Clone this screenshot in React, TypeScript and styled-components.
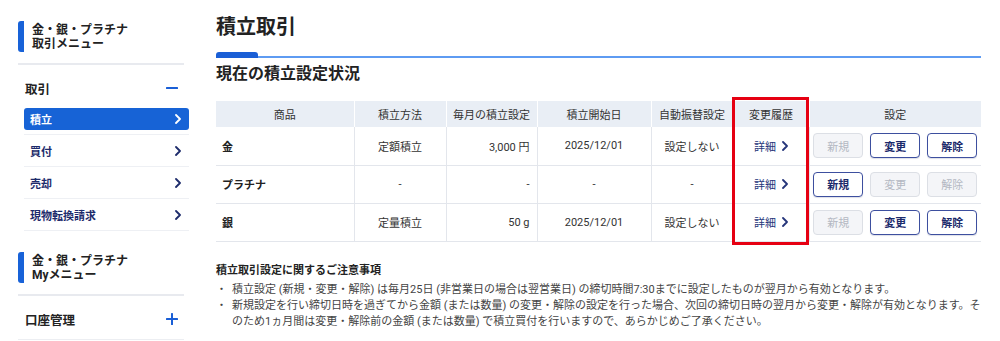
import React from "react";
import styled, { createGlobalStyle } from "styled-components";

const GlobalStyle = createGlobalStyle`
  html, body { margin: 0; padding: 0; background: #fff; }
  body { font-family: Roboto, "Noto Sans CJK JP", sans-serif; color: #333; }
  * { box-sizing: border-box; }
`;

const Page = styled.div`
  display: flex;
  width: 1000px;
  height: 341px;
  overflow: hidden;
  background: #fff;
`;

/* ---------- Sidebar ---------- */
const Sidebar = styled.aside`
  width: 189px;
  flex: none;
  padding: 21px 0 0 18px;
  display: flex;
  flex-direction: column;
`;

const SectionTitle = styled.div<{ $gap?: number }>`
  display: flex;
  align-items: stretch;
  gap: 8px;
  height: 31px;
  margin-top: ${(p) => p.$gap ?? 0}px;
`;

const TitleBar = styled.span`
  width: 6px;
  border-radius: 3px 0 0 3px;
  background: #1862d8;
`;

const TitleText = styled.div`
  display: flex;
  flex-direction: column;
  justify-content: center;
  font-size: 12px;
  font-weight: 700;
  line-height: 14px;
  color: #222;
`;

const Divider = styled.div`
  height: 2px;
  background: #e8eaef;
  margin: 11px 5px 0 0;
`;

const CategoryHeader = styled.div`
  display: flex;
  align-items: center;
  justify-content: space-between;
  height: 22px;
  margin: 12px 0 4px;
  padding: 0 11px 0 7px;
  font-size: 12.5px;
  font-weight: 700;
  color: #222;
`;

const Separator = styled.div`
  height: 1px;
  background: #eceef2;
  margin: 5px 5px 0 0;
`;

const NavList = styled.nav`
  display: flex;
  flex-direction: column;
  margin-left: 6px;
`;

const NavItem = styled.div`
  display: flex;
  align-items: center;
  height: 32px;
  border-bottom: 1px solid #eef0f4;
`;

const NavLabel = styled.div<{ $active?: boolean }>`
  flex: 1;
  height: 22px;
  display: flex;
  align-items: center;
  justify-content: space-between;
  padding: 0 8px 0 6px;
  border-radius: 3px;
  font-size: 11px;
  font-weight: 700;
  background: ${(p) => (p.$active ? "#1763d6" : "transparent")};
  color: ${(p) => (p.$active ? "#fff" : "#1d2b6b")};
`;

const Chevron = ({ color = "currentColor", w = 6, h = 10, sw = 1.8 }: { color?: string; w?: number; h?: number; sw?: number }) => (
  <svg width={w} height={h} viewBox="0 0 6 10" fill="none">
    <polyline points="1,1 5,5 1,9" stroke={color} strokeWidth={sw} strokeLinecap="round" strokeLinejoin="round" />
  </svg>
);

const MinusIcon = () => (
  <svg width="12" height="12" viewBox="0 0 12 12">
    <rect x="0" y="5" width="12" height="2" rx="0.5" fill="#1a5fd6" />
  </svg>
);

const PlusIcon = () => (
  <svg width="12" height="12" viewBox="0 0 12 12">
    <rect x="0" y="5" width="12" height="2" rx="0.5" fill="#1a5fd6" />
    <rect x="5" y="0" width="2" height="12" rx="0.5" fill="#1a5fd6" />
  </svg>
);

/* ---------- Main ---------- */
const Main = styled.main`
  flex: 1;
  padding: 13px 19px 0 27px;
  display: flex;
  flex-direction: column;
  min-width: 0;
`;

const PageTitle = styled.h1`
  margin: 0;
  font-size: 20px;
  line-height: 28px;
  font-weight: 700;
  color: #222;
`;

const TitleRule = styled.div`
  display: flex;
  align-items: flex-end;
  height: 6px;
  margin-top: 11px;
`;

const RuleAccent = styled.span`
  width: 42px;
  height: 6px;
  border-radius: 3px 3px 0 0;
  background: #1a5fd6;
`;

const RuleLine = styled.span`
  flex: 1;
  height: 2px;
  background: #5e9bf2;
`;

const SubTitle = styled.h2`
  margin: 6px 0 0;
  font-size: 16px;
  line-height: 20px;
  font-weight: 700;
  color: #222;
`;

const TableWrap = styled.div`
  position: relative;
  margin-top: 17px;
`;

const Table = styled.table`
  width: 100%;
  border-collapse: collapse;
  table-layout: fixed;
`;

const Th = styled.th`
  height: 26px;
  padding: 0;
  background: #e9eef5;
  font-size: 11px;
  font-weight: 400;
  color: #333;
  text-align: center;
  border-left: 1px solid #fff;
  &:first-child { border-left: none; }
`;

const Td = styled.td<{ $align?: "left" | "center" | "right"; $bold?: boolean }>`
  height: 38px;
  padding: ${(p) => (p.$align === "left" ? "0 0 0 6px" : p.$align === "right" ? "0 7px 0 0" : "0")};
  font-size: 11px;
  font-weight: ${(p) => (p.$bold ? 700 : 400)};
  color: ${(p) => (p.$bold ? "#222" : "#333")};
  text-align: ${(p) => p.$align ?? "center"};
  border-bottom: 1px solid #e3e6ec;
  border-left: 1px solid #e3e6ec;
  &:first-child { border-left: none; }
`;

const DetailLink = styled.span`
  display: inline-flex;
  align-items: center;
  gap: 6px;
  color: #25357a;
  font-size: 11px;
`;

const ButtonGroup = styled.div`
  display: flex;
  justify-content: center;
  gap: 7px;
`;

const ActionButton = styled.button`
  width: 50px;
  height: 25px;
  padding: 0;
  border-radius: 4px;
  font-family: inherit;
  font-size: 11px;
  font-weight: 700;
  background: #fff;
  color: #1b2a6b;
  border: 1.5px solid #3d4f9f;
  box-shadow: 0 1px 1px rgba(30, 40, 100, 0.15);
  &:disabled {
    background: #f4f5f8;
    color: #b3b8c2;
    border: 1px solid #dcdfe5;
    font-weight: 400;
    box-shadow: none;
  }
`;

const Highlight = styled.div`
  position: absolute;
  left: 516px;
  top: -4px;
  width: 77px;
  height: 148px;
  border: 3px solid #e60012;
  pointer-events: none;
`;

const Notes = styled.section`
  margin-top: 21px;
`;

const NotesTitle = styled.h3`
  margin: 0;
  font-size: 11px;
  line-height: 16px;
  font-weight: 700;
  color: #222;
`;

const NotesList = styled.ul`
  list-style: none;
  margin: 3px 0 0;
  padding: 0;
`;

const NoteItem = styled.li`
  display: flex;
  font-size: 11px;
  line-height: 16px;
  color: #444;
`;

const Bullet = styled.span`
  flex: none;
  width: 16px;
`;

type Row = {
  name: string;
  method: string;
  amount: string;
  start: string;
  auto: string;
  active: boolean;
};

const rows: Row[] = [
  { name: "金", method: "定額積立", amount: "3,000 円", start: "2025/12/01", auto: "設定しない", active: true },
  { name: "プラチナ", method: "-", amount: "-", start: "-", auto: "-", active: false },
  { name: "銀", method: "定量積立", amount: "50 g", start: "2025/12/01", auto: "設定しない", active: true },
];

const navItems = ["積立", "買付", "売却", "現物転換請求"];

export default function App() {
  return (
    <Page>
      <GlobalStyle />
      <Sidebar>
        <SectionTitle>
          <TitleBar />
          <TitleText>
            <span>金・銀・プラチナ</span>
            <span>取引メニュー</span>
          </TitleText>
        </SectionTitle>
        <Divider />
        <CategoryHeader>
          <span>取引</span>
          <MinusIcon />
        </CategoryHeader>
        <NavList>
          {navItems.map((label, i) => (
            <NavItem key={label}>
              <NavLabel $active={i === 0}>
                <span>{label}</span>
                <Chevron />
              </NavLabel>
            </NavItem>
          ))}
        </NavList>

        <SectionTitle $gap={21}>
          <TitleBar />
          <TitleText>
            <span>金・銀・プラチナ</span>
            <span>Myメニュー</span>
          </TitleText>
        </SectionTitle>
        <Divider />
        <CategoryHeader>
          <span>口座管理</span>
          <PlusIcon />
        </CategoryHeader>
        <Separator />
      </Sidebar>

      <Main>
        <PageTitle>積立取引</PageTitle>
        <TitleRule>
          <RuleAccent />
          <RuleLine />
        </TitleRule>
        <SubTitle>現在の積立設定状況</SubTitle>

        <TableWrap>
          <Table>
            <colgroup>
              <col style={{ width: 138 }} />
              <col style={{ width: 92 }} />
              <col style={{ width: 91 }} />
              <col style={{ width: 114 }} />
              <col style={{ width: 82 }} />
              <col style={{ width: 76 }} />
              <col style={{ width: 172 }} />
            </colgroup>
            <thead>
              <tr>
                <Th>商品</Th>
                <Th>積立方法</Th>
                <Th>毎月の積立設定</Th>
                <Th>積立開始日</Th>
                <Th>自動振替設定</Th>
                <Th>変更履歴</Th>
                <Th>設定</Th>
              </tr>
            </thead>
            <tbody>
              {rows.map((r) => (
                <tr key={r.name}>
                  <Td $align="left" $bold>{r.name}</Td>
                  <Td>{r.method}</Td>
                  <Td $align="right">{r.amount}</Td>
                  <Td>{r.start}</Td>
                  <Td>{r.auto}</Td>
                  <Td>
                    <DetailLink>
                      詳細
                      <Chevron color="#25357a" />
                    </DetailLink>
                  </Td>
                  <Td>
                    <ButtonGroup>
                      <ActionButton disabled={r.active}>新規</ActionButton>
                      <ActionButton disabled={!r.active}>変更</ActionButton>
                      <ActionButton disabled={!r.active}>解除</ActionButton>
                    </ButtonGroup>
                  </Td>
                </tr>
              ))}
            </tbody>
          </Table>
          <Highlight />
        </TableWrap>

        <Notes>
          <NotesTitle>積立取引設定に関するご注意事項</NotesTitle>
          <NotesList>
            <NoteItem>
              <Bullet>・</Bullet>
              <span>積立設定 (新規・変更・解除) は毎月25日 (非営業日の場合は翌営業日) の締切時間7:30までに設定したものが翌月から有効となります。</span>
            </NoteItem>
            <NoteItem>
              <Bullet>・</Bullet>
              <span>新規設定を行い締切日時を過ぎてから金額 (または数量) の変更・解除の設定を行った場合、次回の締切日時の翌月から変更・解除が有効となります。そのため1ヵ月間は変更・解除前の金額 (または数量) で積立買付を行いますので、あらかじめご了承ください。</span>
            </NoteItem>
          </NotesList>
        </Notes>
      </Main>
    </Page>
  );
}
